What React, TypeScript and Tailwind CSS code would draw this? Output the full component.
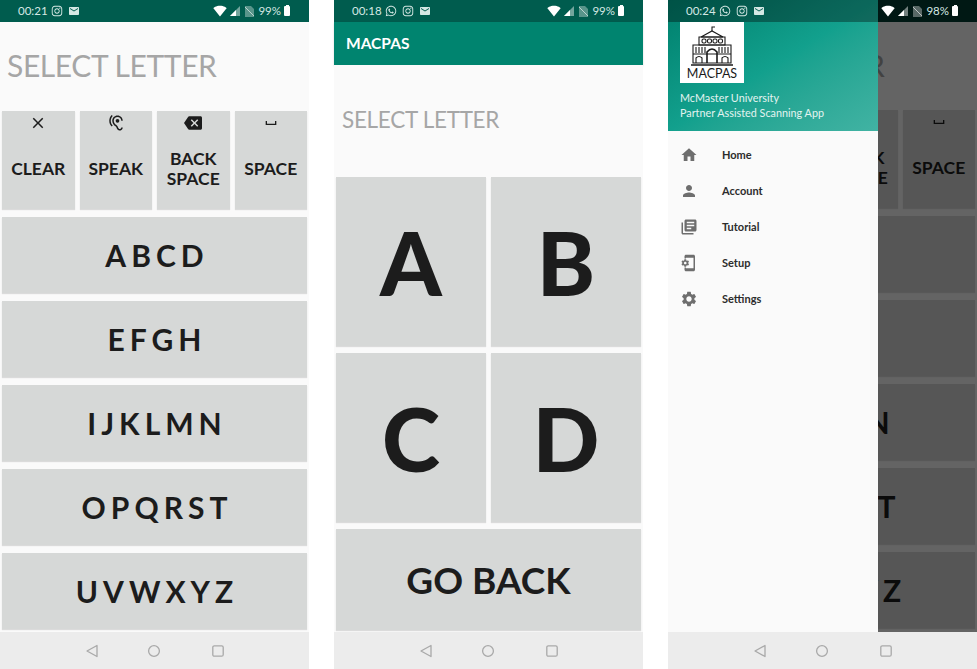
import { FaInstagram, FaWhatsapp } from "react-icons/fa";
import {
  MdBackspace,
  MdClose,
  MdHearing,
  MdHome,
  MdLibraryBooks,
  MdMail,
  MdPerson,
  MdPhonelinkSetup,
  MdSettings,
  MdSignalWifi4Bar,
  MdSpaceBar,
} from "react-icons/md";
import type { ReactNode } from "react";

const StatusBar = ({
  time,
  battery,
  whatsapp = false,
  className = "",
}: {
  time: string;
  battery: string;
  whatsapp?: boolean;
  className?: string;
}) => (
  <div className={`h-[22px] flex items-center pl-[18px] pr-[19px] text-[11.5px] text-[#d5e8e4] ${className}`}>
    <span className="w-[28px]">{time}</span>
    <div className="flex items-center gap-[5px] ml-[5px]">
      {whatsapp && <FaWhatsapp size={12} />}
      <FaInstagram size={12} />
      <MdMail size={12} />
    </div>
    <div className="ml-auto flex items-center">
      <MdSignalWifi4Bar size={14} className="text-white" />
      <svg width="10" height="10" viewBox="0 0 10 10" className="ml-[3px]">
        <path d="M0 10 L10 0 V10 Z" fill="#ffffff" opacity="0.45" />
        <path d="M0 10 L6 4 V10 Z" fill="#ffffff" />
      </svg>
      <svg width="9" height="11" viewBox="0 0 9 11" className="ml-[5px]">
        <path d="M0 0 H6 L9 3 V11 H0 Z" fill="#ffffff" opacity="0.35" />
        <path d="M0 1 L9 10" stroke="#ffffff" strokeWidth="1" opacity="0.6" />
      </svg>
      <span className="ml-[4px]">{battery}</span>
      <div className="ml-[3px] relative w-[6px] h-[10px] bg-white rounded-[1px]">
        <div className="absolute -top-[1px] left-[1.5px] w-[3px] h-[1px] bg-white" />
      </div>
    </div>
  </div>
);

const NavBar = () => (
  <div className="h-[37px] bg-[#ececec] flex items-center pl-[85px] gap-[50px]">
    <svg width="14" height="14" viewBox="0 0 14 14" fill="none" stroke="#a9a9a9" strokeWidth="1.3">
      <path d="M12 1.5 V12.5 L2 7 Z" strokeLinejoin="round" />
    </svg>
    <svg width="14" height="14" viewBox="0 0 14 14" fill="none" stroke="#a9a9a9" strokeWidth="1.3" className="-ml-[2px]">
      <circle cx="7" cy="7" r="5.4" />
    </svg>
    <svg width="14" height="14" viewBox="0 0 14 14" fill="none" stroke="#a9a9a9" strokeWidth="1.3">
      <rect x="1.8" y="1.8" width="10.4" height="10.4" rx="1.5" />
    </svg>
  </div>
);

const KeyButton = ({ children, className = "" }: { children: ReactNode; className?: string }) => (
  <div className={`bg-[#d6d8d7] text-[#1c1c1c] flex items-center justify-center shadow-[0_1px_1px_rgba(0,0,0,0.12)] ${className}`}>
    {children}
  </div>
);

const ToolKey = ({ icon, label }: { icon: ReactNode; label: ReactNode }) => (
  <div className="flex-1 bg-[#d6d8d7] text-[#1c1c1c] font-bold flex flex-col items-center shadow-[0_1px_1px_rgba(0,0,0,0.12)]">
    <div className="h-[24px] flex items-center justify-center">{icon}</div>
    <div className="flex-1 flex items-center justify-center text-center text-[17.5px] leading-[20px] pb-[6px]">
      {label}
    </div>
  </div>
);

const letterRows = ["ABCD", "EFGH", "IJKLMN", "OPQRST", "UVWXYZ"];

const LetterScreen = ({ headHeight }: { headHeight: string }) => (
  <div className="h-[610px] bg-[#fafafa] flex flex-col">
    <div className={`${headHeight} flex items-center pl-[7px] pb-[2px] text-[30px] tracking-[-0.4px] text-[#a6a6a6]`}>
      SELECT LETTER
    </div>
    <div className="flex gap-[5px] px-[2px] h-[98px]">
      <ToolKey icon={<MdClose size={18} />} label="CLEAR" />
      <ToolKey icon={<MdHearing size={18} />} label="SPEAK" />
      <ToolKey icon={<MdBackspace size={18} />} label={<>BACK<br />SPACE</>} />
      <ToolKey icon={<MdSpaceBar size={16} />} label="SPACE" />
    </div>
    <div className="flex flex-col gap-[8px] px-[2px] pt-[8px]">
      {letterRows.map((row) => (
        <KeyButton key={row} className="h-[76px] text-[30px] font-bold tracking-[5px] pl-[5px]">
          {row}
        </KeyButton>
      ))}
    </div>
  </div>
);

const drawerItems = [
  { label: "Home", icon: <MdHome size={18} /> },
  { label: "Account", icon: <MdPerson size={18} /> },
  { label: "Tutorial", icon: <MdLibraryBooks size={18} /> },
  { label: "Setup", icon: <MdPhonelinkSetup size={18} /> },
  { label: "Settings", icon: <MdSettings size={18} /> },
];

const Logo = () => (
  <div className="w-[64px] h-[61px] bg-white flex flex-col items-center">
    <svg width="44" height="41" viewBox="0 0 44 41" fill="none" stroke="#1a1a1a" strokeWidth="1.1" className="mt-[4px]">
      <path d="M22 5 V1 H25" />
      <path d="M11 11 L22 5 L33 11 Z" />
      <path d="M9 11 H35 V19 H9 Z" />
      <rect x="12" y="13" width="4" height="4" rx="1.5" />
      <rect x="17.5" y="13" width="4" height="4" rx="1.5" />
      <rect x="23" y="13" width="4" height="4" rx="1.5" />
      <rect x="28.5" y="13" width="4" height="4" rx="1.5" />
      <path d="M3 19 H41 V37 H3 Z" />
      <path d="M6 21 V27 M9 21 V27 M12 21 V27 M15 21 V27 M29 21 V27 M32 21 V27 M35 21 V27 M38 21 V27" />
      <path d="M3 28 H41" />
      <path d="M17 37 V26 Q22 20 27 26 V37" strokeWidth="1.6" />
      <path d="M6 37 V32 Q9 29 12 32 V37 M32 37 V32 Q35 29 38 32 V37" />
      <path d="M1 39 H43" strokeWidth="1.4" />
    </svg>
    <span className="text-[12.5px] leading-[13px] text-[#1a1a1a]">MACPAS</span>
  </div>
);

export default function App() {
  return (
    <div className="w-[977px] h-[669px] bg-white flex font-['Lato',sans-serif] overflow-hidden">
      <div className="w-[309px] shrink-0 flex flex-col">
        <StatusBar time="00:21" battery="99%" className="bg-[#005c4e]" />
        <LetterScreen headHeight="h-[89px]" />
        <NavBar />
      </div>

      <div className="w-[309px] shrink-0 ml-[25px] flex flex-col">
        <StatusBar time="00:18" battery="99%" whatsapp className="bg-[#005c4e]" />
        <div className="h-[43px] bg-[#00846f] flex items-center pl-[12px] text-[15.5px] font-bold text-white shadow-[0_1px_2px_rgba(0,0,0,0.15)]">
          MACPAS
        </div>
        <div className="h-[567px] bg-[#fafafa] flex flex-col px-[2px]">
          <div className="h-[112px] flex items-center pl-[6px] pb-[2px] text-[22.5px] tracking-[-0.3px] text-[#a6a6a6]">
            SELECT LETTER
          </div>
          <div className="grid grid-cols-2 gap-x-[5px] gap-y-[7px]">
            {["A", "B", "C", "D"].map((letter) => (
              <KeyButton key={letter} className="h-[169px] text-[88px] font-black">
                {letter}
              </KeyButton>
            ))}
          </div>
          <KeyButton className="h-[101px] mt-[7px] text-[37px] font-bold">GO BACK</KeyButton>
        </div>
        <NavBar />
      </div>

      <div className="w-[309px] shrink-0 ml-[25px] flex flex-col">
        <div className="relative h-[632px] overflow-hidden">
          <div className="h-[22px] bg-[#005c4e]" />
          <LetterScreen headHeight="h-[88px]" />
          <div className="absolute inset-0 bg-black/60" />
          <div className="absolute inset-y-0 left-0 w-[210px] bg-[#fafafa] flex flex-col">
            <div className="h-[131px] bg-gradient-to-br from-[#007f6c] via-[#12a08d] to-[#41b3a3] flex flex-col pl-[12px] pt-[22px]">
              <Logo />
              <div className="mt-[8px] text-[10.8px] leading-[14.5px] text-[#e3f3f0]">
                McMaster University
                <br />
                Partner Assisted Scanning App
              </div>
            </div>
            <div className="flex flex-col pt-[6px]">
              {drawerItems.map((item) => (
                <div key={item.label} className="h-[36px] flex items-center pl-[12px]">
                  <span className="w-[42px] text-[#6e6e6e]">{item.icon}</span>
                  <span className="text-[11px] font-bold text-[#2c2c2c]">{item.label}</span>
                </div>
              ))}
            </div>
          </div>
          <StatusBar
            time="00:24"
            battery="98%"
            whatsapp
            className="absolute top-0 inset-x-0 bg-black/35"
          />
        </div>
        <NavBar />
      </div>
    </div>
  );
}
